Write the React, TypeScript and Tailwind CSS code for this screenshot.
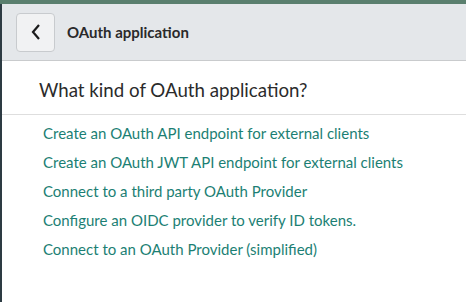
const links = [
  'Create an OAuth API endpoint for external clients',
  'Create an OAuth JWT API endpoint for external clients',
  'Connect to a third party OAuth Provider',
  'Configure an OIDC provider to verify ID tokens.',
  'Connect to an OAuth Provider (simplified)',
]

export default function App() {
  return (
    <div className="w-[466px] h-[302px] overflow-hidden bg-white flex flex-col font-['Lato',sans-serif]">
      <div className="h-[4px] bg-[#5a7f6e]" />
      <div className="flex-1 flex flex-col border-l-2 border-[#2d3b43]">
        {/* Header */}
        <div className="h-[57px] bg-[#e4e7ea] border-b border-[#c9cbcd] flex items-center pl-[14px] gap-[12px]">
          <button
            type="button"
            className="w-[39px] h-[39px] rounded-[4px] border border-[#c8cbce] bg-[#f1f2f3] flex items-center justify-center"
          >
            <svg width="12" height="18" viewBox="0 0 12 18">
              <path d="M9 2 L3 9 L9 16" fill="none" stroke="#1b1b1b" strokeWidth="2.2" />
            </svg>
          </button>
          <span className="text-[15px] font-bold text-[#2a2a2a]">OAuth application</span>
        </div>

        {/* Title */}
        <div className="h-[54px] border-b border-[#dedede] flex items-center pl-[37px] pt-[6px]">
          <h1 className="text-[18.7px] text-[#2b2b2b]">What kind of OAuth application?</h1>
        </div>

        {/* Options */}
        <ul className="pt-[4px] pl-[41px] flex flex-col">
          {links.map((l) => (
            <li key={l} className="h-[29px] flex items-center">
              <a href="#" className="text-[15px] text-[#1c7f74]">
                {l}
              </a>
            </li>
          ))}
        </ul>
      </div>
    </div>
  )
}
